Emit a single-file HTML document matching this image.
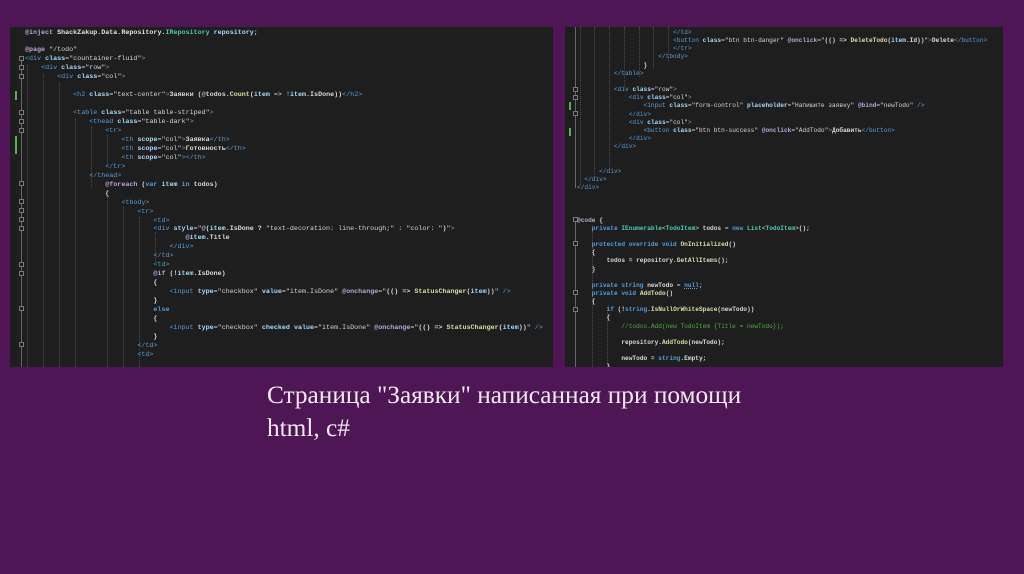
<!DOCTYPE html>
<html><head><meta charset="utf-8"><style>
html,body{margin:0;padding:0}
body{width:1024px;height:574px;background:#4f1655;position:relative;overflow:hidden}
.panel{position:absolute;background:#1e1e1e;overflow:hidden}
.code{position:absolute;white-space:pre;font-family:"Liberation Mono","DejaVu Sans Mono",monospace;color:#d8d8d8}
#L .code{font-size:6.7px;line-height:8.95px}
#R .code{font-size:6.17px;line-height:8.15px}
.t{color:#5a9bd5}.a{color:#a6d8f8;font-weight:bold}.s{color:#d4d4d4}.r{color:#b9a6d6;font-weight:bold}.k{color:#569cd6}.m{color:#dcdcaa}.ty{color:#4ec9b0}.c{color:#57a64a}.p{color:#e0e0e0}.b{font-weight:bold}
.g{position:absolute;width:0;border-left:1px dotted #4a4a4a}
.gr{position:absolute;width:2px;background:#58b050}
.fl{position:absolute;width:1px;background:#666}
.fb{position:absolute;width:5px;height:5px;border:1px solid #777;box-sizing:border-box;background:#1e1e1e}
.cap{position:absolute;left:267px;top:379px;font-family:"Liberation Serif",serif;font-size:25.3px;line-height:32.5px;color:#f2eaf2;white-space:pre}
</style></head><body>

<div class="panel" id="L" style="left:10px;top:27px;width:543px;height:340px">
<div class="fl" style="left:11px;top:30px;height:310px"></div>
<div class="fb" style="left:9px;top:29px"></div><div class="fb" style="left:9px;top:38px"></div><div class="fb" style="left:9px;top:47px"></div>
<div class="fb" style="left:9px;top:83px"></div><div class="fb" style="left:9px;top:92px"></div><div class="fb" style="left:9px;top:101px"></div>
<div class="fb" style="left:9px;top:154px"></div><div class="fb" style="left:9px;top:172px"></div><div class="fb" style="left:9px;top:181px"></div><div class="fb" style="left:9px;top:190px"></div><div class="fb" style="left:9px;top:199px"></div><div class="fb" style="left:9px;top:235px"></div><div class="fb" style="left:9px;top:244px"></div><div class="fb" style="left:9px;top:279px"></div><div class="fb" style="left:9px;top:315px"></div>
<div class="gr" style="left:5px;top:64px;height:9px"></div>
<div class="gr" style="left:5px;top:109px;height:18px"></div>
<div class="g" style="left:17px;top:38px;height:302px"></div>
<div class="g" style="left:33px;top:47px;height:293px"></div>
<div class="g" style="left:49px;top:56px;height:284px"></div>
<div class="g" style="left:65px;top:92px;height:248px"></div>
<div class="g" style="left:81px;top:100px;height:60px"></div>
<div class="g" style="left:97px;top:108px;height:30px"></div>
<div class="g" style="left:97px;top:170px;height:170px"></div>
<div class="g" style="left:113px;top:180px;height:160px"></div>
<div class="g" style="left:129px;top:190px;height:150px"></div>
<div class="g" style="left:145px;top:205px;height:30px"></div>
<div class="code" style="left:15px;top:1.5px"><span class="r">@inject</span> <span class="p b">ShackZakup.Data.Repository.</span><span class="ty b">IRepository</span> <span class="a">repository</span>;

<span class="r">@page</span> <span class="s">"/todo"</span>
<span class="t">&lt;div</span> <span class="a">class</span>=<span class="s">"countainer-fluid"</span><span class="t">&gt;</span>
    <span class="t">&lt;div</span> <span class="a">class</span>=<span class="s">"row"</span><span class="t">&gt;</span>
        <span class="t">&lt;div</span> <span class="a">class</span>=<span class="s">"col"</span><span class="t">&gt;</span>

            <span class="t">&lt;h2</span> <span class="a">class</span>=<span class="s">"text-center"</span><span class="t">&gt;</span><span class="b">Заявки (</span><span class="r">@</span><span class="b">todos.</span><span class="m b">Count</span><span class="b">(</span><span class="a">item</span> =&gt; !<span class="a">item</span><span class="b">.IsDone))</span><span class="t">&lt;/h2&gt;</span>

            <span class="t">&lt;table</span> <span class="a">class</span>=<span class="s">"table table-striped"</span><span class="t">&gt;</span>
                <span class="t">&lt;thead</span> <span class="a">class</span>=<span class="s">"table-dark"</span><span class="t">&gt;</span>
                    <span class="t">&lt;tr&gt;</span>
                        <span class="t">&lt;th</span> <span class="a">scope</span>=<span class="s">"col"</span><span class="t">&gt;</span><span class="b">Заявка</span><span class="t">&lt;/th&gt;</span>
                        <span class="t">&lt;th</span> <span class="a">scope</span>=<span class="s">"col"</span><span class="t">&gt;</span><span class="b">Готовность</span><span class="t">&lt;/th&gt;</span>
                        <span class="t">&lt;th</span> <span class="a">scope</span>=<span class="s">"col"</span><span class="t">&gt;&lt;/th&gt;</span>
                    <span class="t">&lt;/tr&gt;</span>
                <span class="t">&lt;/thead&gt;</span>
                    <span class="r">@foreach</span> <span class="b">(</span><span class="k b">var</span> <span class="a">item</span> <span class="k b">in</span> <span class="b">todos)</span>
                    <span class="b">{</span>
                        <span class="t">&lt;tbody&gt;</span>
                            <span class="t">&lt;tr&gt;</span>
                                <span class="t">&lt;td&gt;</span>
                                <span class="t">&lt;div</span> <span class="a">style</span>=<span class="s">"</span><span class="r">@</span><span class="b">(</span><span class="a">item</span><span class="b">.IsDone ? </span><span class="s">"text-decoration: line-through;"</span> : <span class="s">"color: "</span><span class="b">)</span><span class="s">"</span><span class="t">&gt;</span>
                                        <span class="r">@</span><span class="a">item</span><span class="b">.Title</span>
                                    <span class="t">&lt;/div&gt;</span>
                                <span class="t">&lt;/td&gt;</span>
                                <span class="t">&lt;td&gt;</span>
                                <span class="r">@if</span> <span class="b">(!</span><span class="a">item</span><span class="b">.IsDone)</span>
                                <span class="b">{</span>
                                    <span class="t">&lt;input</span> <span class="a">type</span>=<span class="s">"checkbox"</span> <span class="a">value</span>=<span class="s">"item.IsDone"</span> <span class="r">@onchange</span>=<span class="s">"</span><span class="b">(() =&gt; </span><span class="m b">StatusChanger</span><span class="b">(</span><span class="a">item</span><span class="b">))</span><span class="s">"</span> <span class="t">/&gt;</span>
                                <span class="b">}</span>
                                <span class="k b">else</span>
                                <span class="b">{</span>
                                    <span class="t">&lt;input</span> <span class="a">type</span>=<span class="s">"checkbox"</span> <span class="a">checked</span> <span class="a">value</span>=<span class="s">"item.IsDone"</span> <span class="r">@onchange</span>=<span class="s">"</span><span class="b">(() =&gt; </span><span class="m b">StatusChanger</span><span class="b">(</span><span class="a">item</span><span class="b">))</span><span class="s">"</span> <span class="t">/&gt;</span>
                                <span class="b">}</span>
                            <span class="t">&lt;/td&gt;</span>
                            <span class="t">&lt;td&gt;</span></div>
</div>

<div class="panel" id="R" style="left:565px;top:27px;width:438px;height:340px">
<div class="fl" style="left:10px;top:0px;height:161px"></div>
<div class="fl" style="left:10px;top:192px;height:148px"></div>
<div class="fb" style="left:8px;top:60px"></div><div class="fb" style="left:8px;top:68px"></div><div class="fb" style="left:8px;top:84px"></div>
<div class="fb" style="left:8px;top:190px"></div><div class="fb" style="left:8px;top:214px"></div><div class="fb" style="left:8px;top:263px"></div><div class="fb" style="left:8px;top:280px"></div>
<div class="gr" style="left:4px;top:75px;height:8px"></div>
<div class="gr" style="left:4px;top:101px;height:8px"></div>
<div class="g" style="left:15px;top:0px;height:158px"></div>
<div class="g" style="left:29px;top:0px;height:150px"></div>
<div class="g" style="left:44px;top:0px;height:142px"></div>
<div class="g" style="left:59px;top:0px;height:60px"></div>
<div class="g" style="left:74px;top:0px;height:50px"></div>
<div class="g" style="left:88px;top:0px;height:42px"></div>
<div class="g" style="left:103px;top:0px;height:34px"></div>
<div class="g" style="left:27px;top:200px;height:140px"></div>
<div class="g" style="left:42px;top:280px;height:60px"></div>
<div class="code" style="left:12px;top:2px">                          <span class="t">&lt;/td&gt;</span>
                          <span class="t">&lt;button</span> <span class="a">class</span>=<span class="s">"btn btn-danger"</span> <span class="r">@onclick</span>=<span class="s">"</span><span class="b">(() =&gt; </span><span class="m b">DeleteTodo</span><span class="b">(</span><span class="a">item</span><span class="b">.Id))</span><span class="s">"</span><span class="t">&gt;</span><span class="b">Delete</span><span class="t">&lt;/button&gt;</span>
                          <span class="t">&lt;/tr&gt;</span>
                      <span class="t">&lt;/tbody&gt;</span>
                  <span class="b">}</span>
          <span class="t">&lt;/table&gt;</span>

          <span class="t">&lt;div</span> <span class="a">class</span>=<span class="s">"row"</span><span class="t">&gt;</span>
              <span class="t">&lt;div</span> <span class="a">class</span>=<span class="s">"col"</span><span class="t">&gt;</span>
                  <span class="t">&lt;input</span> <span class="a">class</span>=<span class="s">"form-control"</span> <span class="a">placeholder</span>=<span class="s">"Напишите заявку"</span> <span class="r">@bind</span>=<span class="s">"newTodo"</span> <span class="t">/&gt;</span>
              <span class="t">&lt;/div&gt;</span>
              <span class="t">&lt;div</span> <span class="a">class</span>=<span class="s">"col"</span><span class="t">&gt;</span>
                  <span class="t">&lt;button</span> <span class="a">class</span>=<span class="s">"btn btn-success"</span> <span class="r">@onclick</span>=<span class="s">"AddTodo"</span><span class="t">&gt;</span><span class="b">Добавить</span><span class="t">&lt;/button&gt;</span>
              <span class="t">&lt;/div&gt;</span>
          <span class="t">&lt;/div&gt;</span>


      <span class="t">&lt;/div&gt;</span>
  <span class="t">&lt;/div&gt;</span>
<span class="t">&lt;/div&gt;</span>



<span class="r">@code</span> <span class="b">{</span>
    <span class="k b">private</span> <span class="ty b">IEnumerable</span>&lt;<span class="ty b">TodoItem</span>&gt; <span class="b">todos</span> = <span class="k b">new</span> <span class="ty b">List</span>&lt;<span class="ty b">TodoItem</span>&gt;<span class="b">();</span>

    <span class="k b">protected override void</span> <span class="m b">OnInitialized</span><span class="b">()</span>
    <span class="b">{</span>
        <span class="b">todos = repository.</span><span class="m b">GetAllItems</span><span class="b">();</span>
    <span class="b">}</span>

    <span class="k b">private string</span> <span class="b">newTodo</span> = <span class="k b" style="text-decoration:underline dotted">null</span>;
    <span class="k b">private void</span> <span class="m b">AddTodo</span><span class="b">()</span>
    <span class="b">{</span>
        <span class="k b">if</span> <span class="b">(!</span><span class="k b">string</span><span class="b">.</span><span class="m b">IsNullOrWhiteSpace</span><span class="b">(newTodo))</span>
        <span class="b">{</span>
            <span class="c">//todos.Add(new TodoItem {Title = newTodo});</span>

            <span class="b">repository.</span><span class="m b">AddTodo</span><span class="b">(newTodo);</span>

            <span class="b">newTodo = </span><span class="k b">string</span><span class="b">.Empty;</span>
        <span class="b">}</span></div>
</div>

<div class="cap">Страница "Заявки" написанная при помощи
html, c#</div>
</body></html>
